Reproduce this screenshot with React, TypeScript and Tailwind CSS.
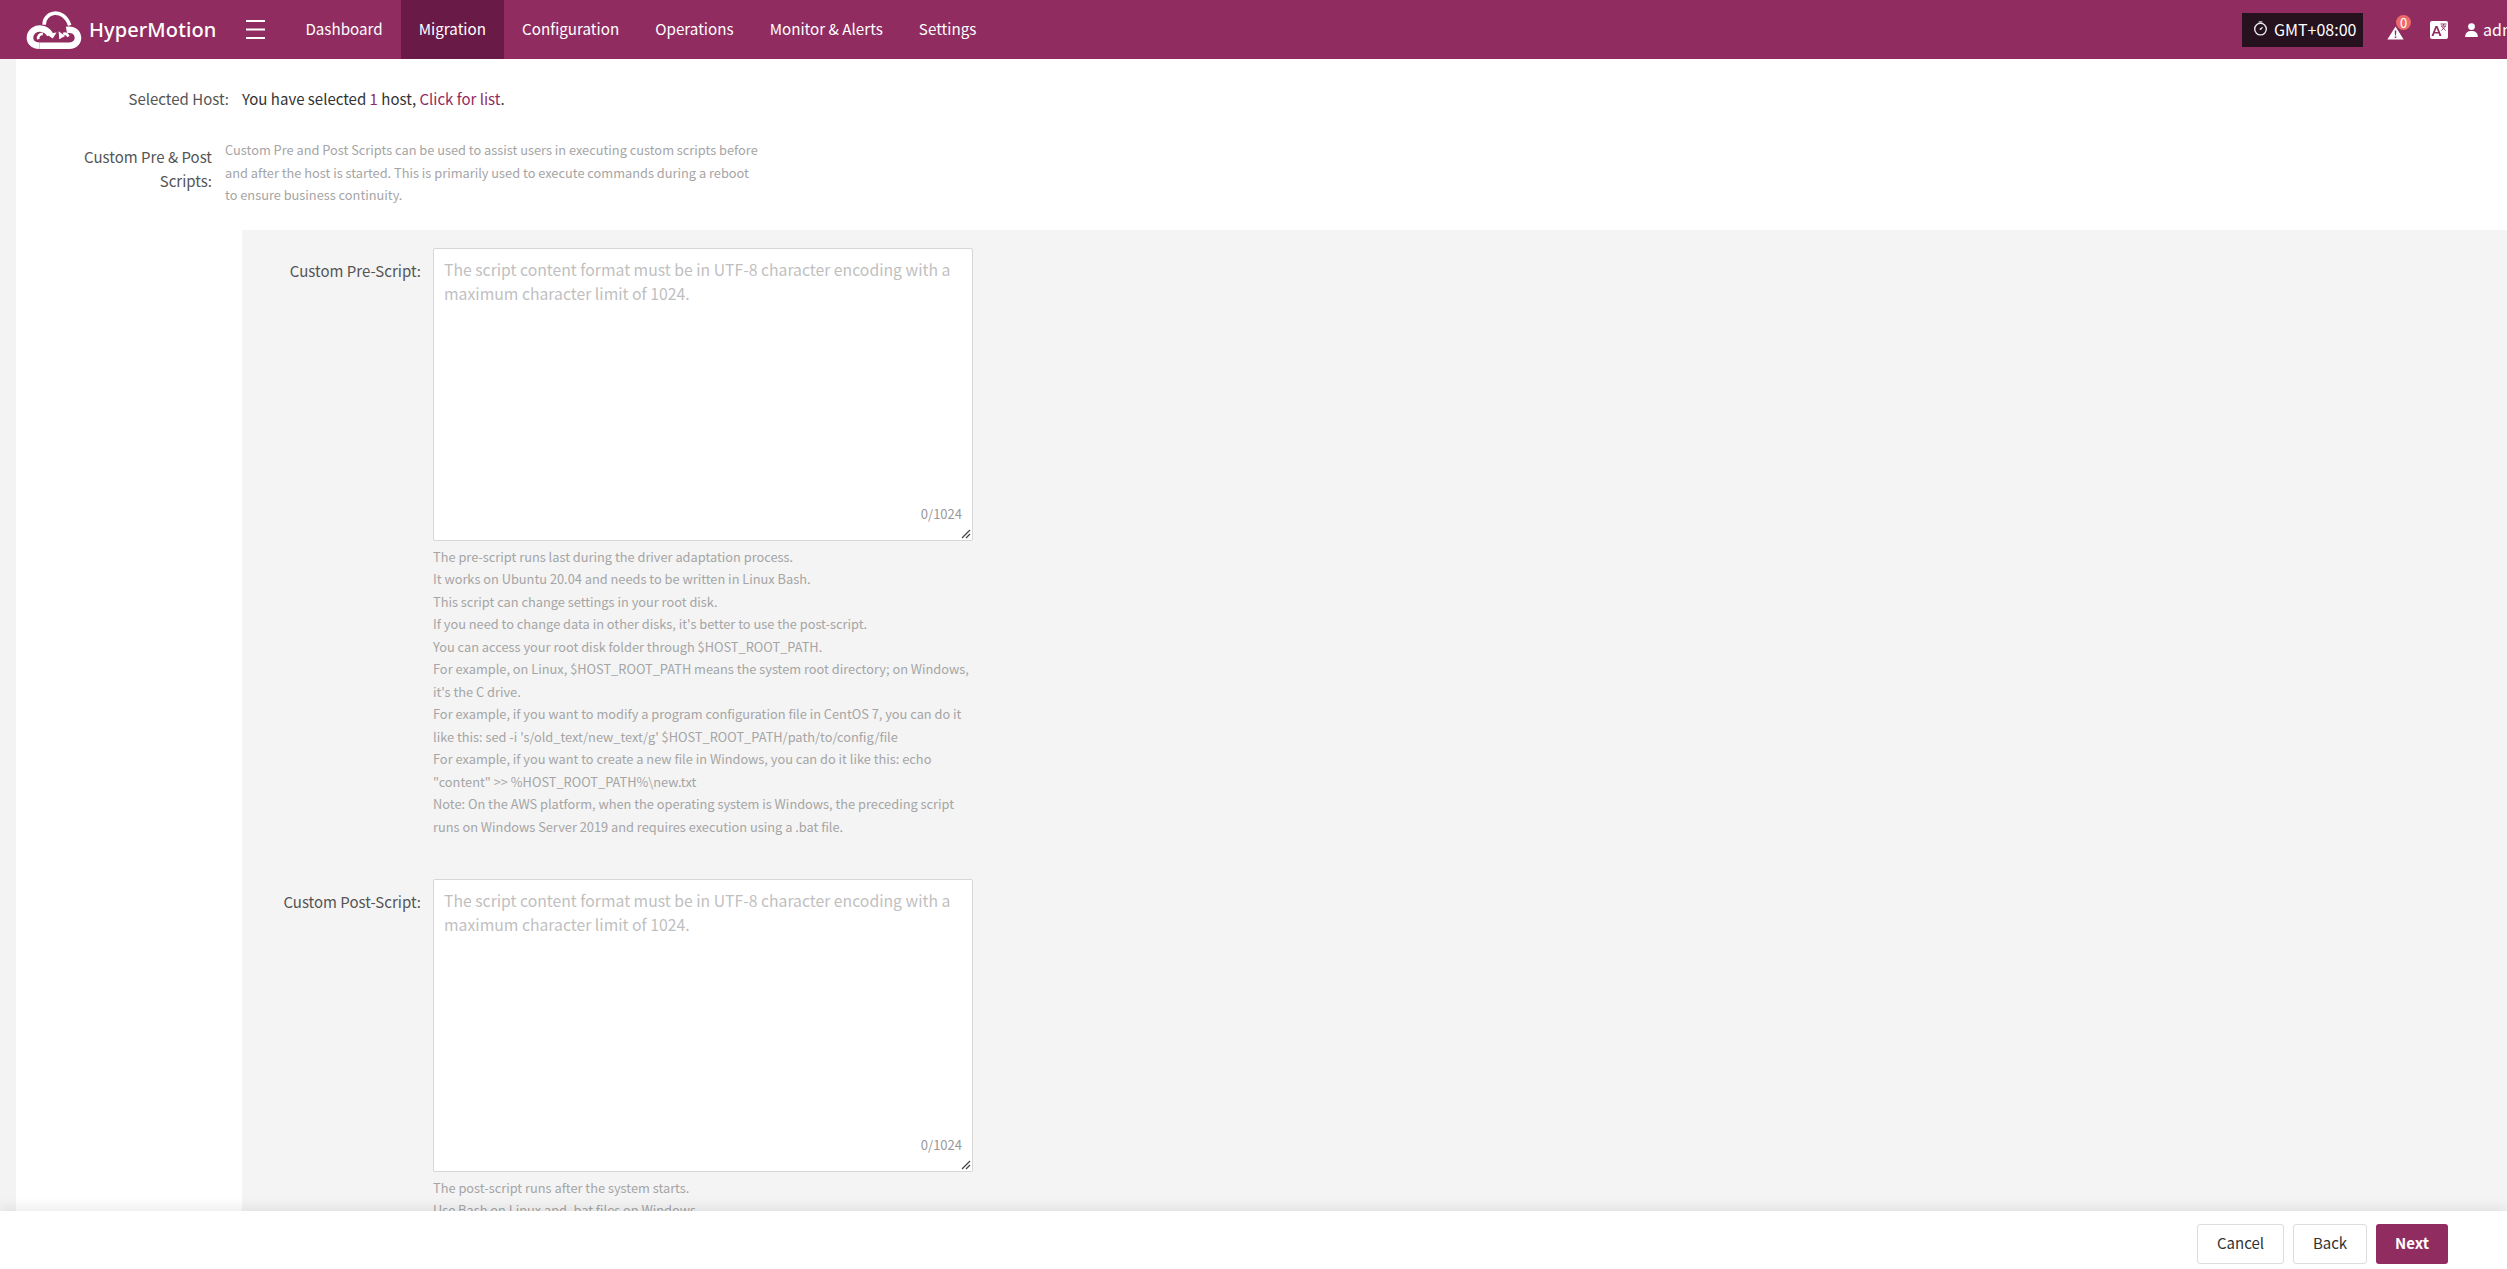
const navItems = ["Dashboard", "Migration", "Configuration", "Operations", "Monitor & Alerts", "Settings"];

const preNotes = [
  "The pre-script runs last during the driver adaptation process.",
  "It works on Ubuntu 20.04 and needs to be written in Linux Bash.",
  "This script can change settings in your root disk.",
  "If you need to change data in other disks, it's better to use the post-script.",
  "You can access your root disk folder through $HOST_ROOT_PATH.",
  "For example, on Linux, $HOST_ROOT_PATH means the system root directory; on Windows, it's the C drive.",
  "For example, if you want to modify a program configuration file in CentOS 7, you can do it like this: sed -i 's/old_text/new_text/g' $HOST_ROOT_PATH/path/to/config/file",
  "For example, if you want to create a new file in Windows, you can do it like this: echo \"content\" >> %HOST_ROOT_PATH%\\new.txt",
  "Note: On the AWS platform, when the operating system is Windows, the preceding script runs on Windows Server 2019 and requires execution using a .bat file.",
];

const postNotes = ["The post-script runs after the system starts.", "Use Bash on Linux and .bat files on Windows."];

const Logo = () => (
  <svg viewBox="48 20 168 125" className="h-[41px] w-[56px]" fill="none" stroke="white">
    <path d="M88 132 L178 132 C198 132 206 118 205 106 C203 90 190 80 170 84" strokeWidth="20" />
    <path d="M88 132 C66 132 57 118 59 104 C61 88 76 78 94 80 C106 81 114 88 120 98" strokeWidth="20" />
    <path d="M102 68 C100 30 160 12 180 70" strokeWidth="11" />
    <path d="M84 112 C82 102 88 96 98 96" strokeWidth="8" />
    <path d="M108 96 L140 92 L128 110 Z" fill="white" stroke="none" />
    <path d="M176 104 C172 96 166 94 160 96" strokeWidth="8" />
    <path d="M146 88 L166 102 L148 112 Z" fill="white" stroke="none" />
  </svg>
);

const ClockIcon = () => (
  <svg viewBox="0 0 16 16" className="size-[15px]" fill="none" stroke="#e8e8e8">
    <circle cx="8" cy="8.6" r="6.2" strokeWidth="1.5" />
    <path d="M6 1 L10 1" strokeWidth="1.3" />
    <path d="M8 8.6 L10.2 6.6" strokeWidth="1.3" />
    <circle cx="8" cy="8.6" r="1" fill="#e8e8e8" stroke="none" />
  </svg>
);

const AlertIcon = () => (
  <svg viewBox="0 0 17 14" className="block h-[14px] w-[17px]">
    <path d="M8.5 0.5 L16.6 13.5 L0.4 13.5 Z" fill="white" />
    <path d="M7.7 4.5 H9.3 L9 9.5 H8 Z M7.7 10.5 H9.3 V12 H7.7 Z" fill="#912c60" />
  </svg>
);

const TranslateIcon = () => (
  <svg viewBox="0 0 18 18" className="block size-[18px]">
    <rect width="18" height="18" rx="2" fill="white" />
    <path d="M1.5 15 L5.5 5 H7.5 L11.5 15 H9.4 L8.6 12.6 H4.4 L3.6 15 Z M5 11 H8 L6.5 7 Z" fill="#912c60" />
    <path d="M10.5 3 H16.5 M13.5 3 V4.5 M11 5 H16 M11.5 5 L15.5 9.5 M15.5 5 L11.5 9.5" stroke="#912c60" strokeWidth="0.9" fill="none" />
  </svg>
);

const UserIcon = () => (
  <svg viewBox="0 0 13 14" className="ml-[17px] h-[14px] w-[13px]" fill="white">
    <circle cx="6.5" cy="3.6" r="3.4" />
    <path d="M0.2 14 C0.2 9.8 2.6 8 6.5 8 C10.4 8 12.8 9.8 12.8 14 Z" />
  </svg>
);

const MenuIcon = () => (
  <svg viewBox="0 0 19 19" className="ml-[30px] size-[19px]" stroke="white" strokeWidth="2">
    <path d="M0 1 H19 M0 9.5 H19 M0 18 H19" />
  </svg>
);

const ScriptField = ({ label, notes, rowH }: { label: string; notes: string[]; rowH: string }) => (
  <div className={`flex ${rowH}`}>
    <label className="w-[191px] shrink-0 pt-[11px] pr-[12px] text-right text-[15px] leading-[24px] text-[#555]">
      {label}
    </label>
    <div className="w-[540px]">
      <div className="relative h-[293px] rounded-[2px] border border-[#d7d7d7] bg-white">
        <p className="px-[10px] pt-[9px] text-[15.75px] leading-[24px] text-[#bfbfbf]">
          The script content format must be in UTF-8 character encoding with a maximum character limit of 1024.
        </p>
        <span className="absolute right-[10px] bottom-[18px] text-[13px] leading-[16px] text-[#999]">0/1024</span>
        <svg viewBox="0 0 10 10" className="absolute right-[1px] bottom-[1px] size-[10px]" stroke="#444" strokeWidth="1.2">
          <path d="M1 9 L9 1 M5 9 L9 5" />
        </svg>
      </div>
      <div className="mt-[5px] text-[12.8px] leading-[22.5px] text-[#a5a5a5]">
        {notes.map((note) => (
          <p key={note}>{note}</p>
        ))}
      </div>
    </div>
  </div>
);

export default function App() {
  return (
    <div className="flex h-screen flex-col overflow-hidden bg-white font-['Noto_Sans_CJK_SC','Noto_Sans',sans-serif]">
      <header className="flex h-[59px] shrink-0 items-center bg-[#912c60] text-white">
        <div className="ml-[26px] flex items-center">
          <Logo />
          <span className="ml-[7px] font-['Noto_Sans',sans-serif] text-[20px] leading-[28px] font-medium tracking-[0.1px]">
            HyperMotion
          </span>
        </div>
        <MenuIcon />
        <nav className="ml-[22px] flex h-full">
          {navItems.map((item) => (
            <div
              key={item}
              className={`flex h-full items-center px-[18px] pb-[3px] text-[15.2px] ${item === "Migration" ? "bg-[#6a1a46]" : ""}`}
            >
              {item}
            </div>
          ))}
        </nav>
        <div className="ml-auto flex h-full items-center overflow-hidden">
          <div className="flex h-[34px] w-[121px] items-center gap-[6px] bg-[#25121e] pb-[2px] pl-[11px] text-[16px]">
            <ClockIcon />
            GMT+08:00
          </div>
          <div className="relative mt-[6px] ml-[24px]">
            <AlertIcon />
            <span className="absolute -top-[11px] left-[9px] flex size-[15px] items-center justify-center rounded-full bg-[#ee6a6a] text-[13px] leading-none">
              0
            </span>
          </div>
          <div className="ml-[26px]">
            <TranslateIcon />
          </div>
          <UserIcon />
          <span className="ml-[5px] w-[24px] overflow-hidden pb-[2px] text-[16px]">admin</span>
        </div>
      </header>

      <main className="flex min-h-0 flex-1 overflow-hidden">
        <div className="w-[16px] shrink-0 bg-[#f3f3f3]" />
        <div className="min-w-0 flex-1">
          <div className="flex h-[60px] items-end pb-[9px] text-[15px] leading-[22px]">
            <span className="w-[213px] text-right text-[#555]">Selected Host:</span>
            <span className="ml-[13px] text-[#333]">
              You have selected <span className="text-[#912c60]">1</span> host,{" "}
              <span className="text-[#912c60]">Click for list</span>.
            </span>
          </div>
          <div className="flex pt-[20px]">
            <label className="flex w-[196px] shrink-0 justify-end pt-[6px] text-right text-[15px] leading-[24px] text-[#555]">
              <span className="w-[140px]">Custom Pre &amp; Post Scripts:</span>
            </label>
            <p className="ml-[13px] w-[539px] text-[12.8px] leading-[22.5px] text-[#a5a5a5]">
              Custom Pre and Post Scripts can be used to assist users in executing custom scripts before and after the host
              is started. This is primarily used to execute commands during a reboot to ensure business continuity.
            </p>
          </div>
          <section className="mt-[23px] ml-[226px] flex flex-col bg-[#f4f4f4] pt-[18px]">
            <ScriptField label="Custom Pre-Script:" notes={preNotes} rowH="h-[631px]" />
            <ScriptField label="Custom Post-Script:" notes={postNotes} rowH="h-[400px]" />
          </section>
        </div>
      </main>

      <footer className="relative flex h-[58px] shrink-0 items-center justify-end gap-[9px] bg-white pt-[7px] pr-[59px] shadow-[0_-4px_12px_rgba(0,0,0,0.08)]">
        <button className="h-[40px] w-[87px] rounded-[3px] border border-[#ddd] text-[15px] text-[#333]">Cancel</button>
        <button className="h-[40px] w-[74px] rounded-[3px] border border-[#ddd] text-[15px] text-[#333]">Back</button>
        <button className="h-[40px] w-[72px] rounded-[3px] bg-[#912c60] text-[15px] font-bold text-white">Next</button>
      </footer>
    </div>
  );
}
